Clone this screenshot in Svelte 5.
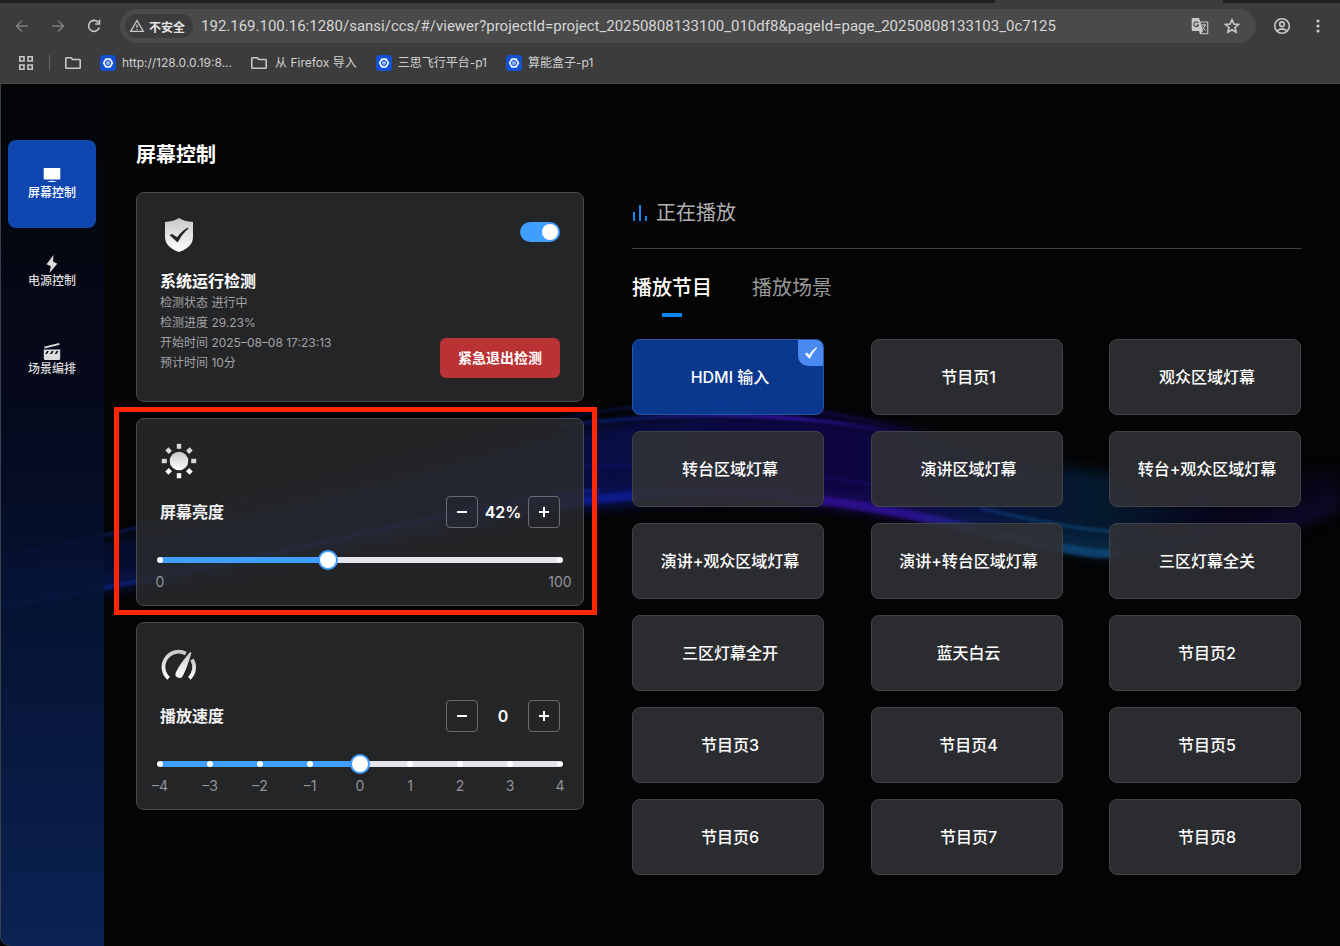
<script lang="ts">
  const navItems = [
    { id: "screen", label: "屏幕控制" },
    { id: "power", label: "电源控制" },
    { id: "scene", label: "场景编排" },
  ];

  const bookmarks = [
    { kind: "folder", label: "" },
    { kind: "site", label: "http://128.0.0.19:8..." },
    { kind: "folder", label: "从 Firefox 导入" },
    { kind: "site", label: "三思飞行平台-p1" },
    { kind: "site", label: "算能盒子-p1" },
  ];

  const status = [
    ["检测状态", "进行中"],
    ["检测进度", "29.23%"],
    ["开始时间", "2025–08–08 17:23:13"],
    ["预计时间", "10分"],
  ];

  const programs = [
    "HDMI 输入",
    "节目页1",
    "观众区域灯幕",
    "转台区域灯幕",
    "演讲区域灯幕",
    "转台+观众区域灯幕",
    "演讲+观众区域灯幕",
    "演讲+转台区域灯幕",
    "三区灯幕全关",
    "三区灯幕全开",
    "蓝天白云",
    "节目页2",
    "节目页3",
    "节目页4",
    "节目页5",
    "节目页6",
    "节目页7",
    "节目页8",
  ];

  const tabs = ["播放节目", "播放场景"];
  const speedMarks = [-4, -3, -2, -1, 0, 1, 2, 3, 4];

  let url = $state(
    "192.169.100.16:1280/sansi/ccs/#/viewer?projectId=project_20250808133100_010df8&pageId=page_20250808133103_0c7125",
  );
  let activeNav = $state("screen");
  let activeTab = $state(tabs[0]);
  let playing = $state(programs[0]);
  let checking = $state(true);
  let brightness = $state(42);
  let speed = $state(0);

  const clamp = (n: number, lo: number, hi: number) => Math.min(hi, Math.max(lo, n));
  const signed = (n: number) => (n < 0 ? `–${-n}` : `${n}`);
</script>

{#snippet slider(id: string, value: number, min: number, max: number, marks: number[], set: (n: number) => void)}
  <div class="slider">
    <div class="track">
      <div class="fill" style:width="{((value - min) / (max - min)) * 100}%"></div>
    </div>
    <div class="stops">
      {#each marks as m (m)}<i></i>{/each}
    </div>
    <input {id} type="range" {min} {max} {value} oninput={(e) => set(+e.currentTarget.value)} />
  </div>
  <div class="marks">
    {#each marks as m (m)}<span>{signed(m)}</span>{/each}
  </div>
{/snippet}

{#snippet stepper(text: string, name: string, step: (d: number) => void)}
  <div class="stepper">
    <button type="button" aria-label="{name} 减" onclick={() => step(-1)}>
      <svg width="12" height="12" viewBox="0 0 12 12"><path d="M1 6h10" /></svg>
    </button>
    <output>{text}</output>
    <button type="button" aria-label="{name} 加" onclick={() => step(1)}>
      <svg width="12" height="12" viewBox="0 0 12 12"><path d="M1 6h10M6 1v10" /></svg>
    </button>
  </div>
{/snippet}

<div class="window">
  <header class="chrome">
    <div class="strip"><div class="strip-tab"></div></div>
    <div class="toolbar">
      <button type="button" class="tool dim" aria-label="后退">
        <svg width="16" height="16" viewBox="0 0 16 16"><path d="M14 8H3M8 2.500L2.500 8L8 13.500" /></svg>
      </button>
      <button type="button" class="tool dim" aria-label="前进">
        <svg width="16" height="16" viewBox="0 0 16 16"><path d="M2 8h11M8 2.500L13.500 8L8 13.500" /></svg>
      </button>
      <button type="button" class="tool" aria-label="刷新">
        <svg width="16" height="16" viewBox="0 0 16 16"><path d="M13.300 9.500A5.500 5.500 0 1 1 12.500 4.600M13.500 1.800V6H9.200" /></svg>
      </button>
      <div class="omnibox">
        <button type="button" class="chip">
          <svg width="16" height="16" viewBox="0 0 16 16"><path d="M8 2.500L14.300 13.300H1.700ZM8 6.500v3.200M8 10.900v1.200" /></svg>
          不安全
        </button>
        <input type="text" aria-label="地址" bind:value={url} />
        <button type="button" class="tool" aria-label="翻译">
          <svg width="18" height="18" viewBox="0 0 18 18">
            <path d="M2 1h6l1.300 3.500H16a1.300 1.300 0 0 1 1.300 1.300V16a1.300 1.300 0 0 1-1.300 1.300H9L8 14H2a1.300 1.300 0 0 1-1.300-1.300V2.300A1.300 1.300 0 0 1 2 1Z" fill="#c8c8c8" stroke="none" />
            <path d="M9.700 5.600H15.600a.6.6 0 0 1 .6.6V15.600a.6.6 0 0 1-.6.6H10.300L12 14Z" fill="#4a4a4a" stroke="none" />
            <path d="M7.200 6A2.400 2.400 0 1 0 7.500 8H5.300" stroke="#4a4a4a" stroke-width="1.200" />
            <path d="M10.300 8h5M12.800 6.800V8M14.300 8q-.8 3-3.300 4.800M11.200 9.500q1 2.200 3.600 4" stroke-width="1" />
          </svg>
        </button>
        <button type="button" class="tool" aria-label="收藏">
          <svg width="16" height="16" viewBox="0 0 16 16"><path d="M8 1.700L9.900 6L14.600 6.400L11 9.500L12.100 14.100L8 11.700L3.900 14.100L5 9.500L1.400 6.400L6.100 6Z" /></svg>
        </button>
      </div>
      <button type="button" class="tool" aria-label="个人资料">
        <svg width="18" height="18" viewBox="0 0 18 18"><circle cx="9" cy="9" r="7.300" /><circle cx="9" cy="7.200" r="2.300" /><path d="M4 14q5-4.200 10 0" /></svg>
      </button>
      <button type="button" class="tool" aria-label="菜单">
        <svg width="16" height="16" viewBox="0 0 16 16"><g fill="#c8c8c8" stroke="none"><circle cx="8" cy="3" r="1.600" /><circle cx="8" cy="8" r="1.600" /><circle cx="8" cy="13" r="1.600" /></g></svg>
      </button>
    </div>
    <nav class="bookmarks" aria-label="书签">
      <button type="button" class="apps" aria-label="应用">
        <svg width="16" height="16" viewBox="0 0 16 16"><path d="M1.800 1.800h4.200v4.200h-4.200ZM10 1.800h4.200v4.200H10ZM1.800 10h4.200v4.200h-4.200ZM10 10h4.200v4.200H10Z" /></svg>
      </button>
      <span class="divider"></span>
      {#each bookmarks as b, i (i)}
        <a href="#top" class={b.kind} aria-label={b.label || "文件夹"}>
          {#if b.kind === "folder"}
            <svg width="16" height="16" viewBox="0 0 16 16"><path d="M1.500 13.300Q.8 13.300 .8 12.500V3.500Q.8 2.700 1.500 2.700H6L7.700 4.500H14.500Q15.200 4.500 15.200 5.300V12.500Q15.200 13.300 14.500 13.300Z" /></svg>
          {:else}
            <svg width="16" height="16" viewBox="0 0 16 16">
              <rect width="16" height="16" rx="3.500" fill="#1450d2" stroke="none" />
              <path d="M5.400 3.300h5.200L13.300 8l-2.700 4.700H5.400L2.700 8Z" fill="#e9f2ff" stroke="none" />
              <circle cx="8" cy="8" r="2.600" fill="#8fb4f5" stroke="#1450d2" stroke-width="1" />
            </svg>
          {/if}
          {#if b.label}<span>{b.label}</span>{/if}
        </a>
      {/each}
    </nav>
  </header>

  <div class="app">
    <!-- light ribbons behind the panels -->
    <svg class="waves" viewBox="0 84 1340 862" preserveAspectRatio="none" aria-hidden="true">
      <defs>
        <linearGradient id="veil" gradientUnits="userSpaceOnUse" x1="0" x2="1340" y1="0" y2="0">
          <stop offset="0" stop-color="#061440" />
          <stop offset="0.3" stop-color="#060e3c" />
          <stop offset="0.46" stop-color="#0a1260" />
          <stop offset="0.63" stop-color="#12065a" />
          <stop offset="0.72" stop-color="#0a1858" />
          <stop offset="0.82" stop-color="#062440" />
          <stop offset="0.9" stop-color="#080828" />
          <stop offset="1" stop-color="#0c0622" />
        </linearGradient>
        <linearGradient id="ribbon" gradientUnits="userSpaceOnUse" x1="0" x2="1340" y1="0" y2="0">
          <stop offset="0" stop-color="#0d2a8c" />
          <stop offset="0.3" stop-color="#1222a0" />
          <stop offset="0.47" stop-color="#1020a8" />
          <stop offset="0.6" stop-color="#3a10a8" />
          <stop offset="0.68" stop-color="#3414b0" />
          <stop offset="0.76" stop-color="#10508c" />
          <stop offset="0.83" stop-color="#105890" />
          <stop offset="0.9" stop-color="#180f50" />
          <stop offset="1" stop-color="#1e1048" />
        </linearGradient>
        <linearGradient id="crest" gradientUnits="userSpaceOnUse" x1="0" x2="960" y1="0" y2="0">
          <stop offset="0" stop-color="#123a9c" />
          <stop offset="0.12" stop-color="#142a9c" />
          <stop offset="0.35" stop-color="#0c1444" />
          <stop offset="0.65" stop-color="#0c1c70" />
          <stop offset="0.82" stop-color="#3812b0" />
          <stop offset="1" stop-color="#200a70" stop-opacity="0" />
        </linearGradient>
        <filter id="soft" x="-10%" y="-50%" width="120%" height="200%" color-interpolation-filters="sRGB"><feGaussianBlur stdDeviation="7" /></filter>
        <filter id="fine" x="-10%" y="-50%" width="120%" height="200%" color-interpolation-filters="sRGB"><feGaussianBlur stdDeviation="1.400" /></filter>
      </defs>
      <path d="M0 562C240 515 420 470 600 425C720 405 850 408 960 446C1080 475 1200 490 1340 470V510C1270 546 1150 560 1062 544C950 524 880 498 745 494C520 494 300 560 0 602Z" fill="url(#veil)" opacity="0.700" filter="url(#soft)" />
      <g fill="none" stroke="url(#ribbon)">
        <path d="M0 602C300 555 470 510 640 497C800 488 880 506 960 524S1130 560 1210 542S1300 520 1340 500" stroke-width="14" opacity="0.400" filter="url(#soft)" />
        <path d="M560 504C680 486 770 492 860 506S1000 538 1062 548S1090 552 1120 553" stroke-width="9" opacity="0.650" filter="url(#fine)" />
        <path d="M0 607C300 555 430 510 600 490" stroke-width="3" opacity="0.800" filter="url(#fine)" />
        <path d="M980 508C1030 520 1080 530 1120 532" stroke-width="3" opacity="0.600" filter="url(#fine)" />
        <path d="M240 540C400 480 560 462 640 466C780 464 860 480 960 505" stroke-width="2" opacity="0.400" filter="url(#fine)" />
      </g>
      <g fill="none" stroke="url(#crest)" filter="url(#fine)">
        <path d="M0 558C240 510 420 448 600 411C720 394 830 405 940 440" stroke-width="2" opacity="0.700" />
        <path d="M560 426C680 410 800 412 900 434" stroke-width="3" />
      </g>
    </svg>

    <nav class="sidebar" aria-label="主导航">
      {#each navItems as item (item.id)}
        <button type="button" class:active={activeNav === item.id} onclick={() => (activeNav = item.id)}>
          <svg width="18" height="18" viewBox="0 0 18 18" fill="currentColor">
            {#if item.id === "screen"}
              <path d="M1.500 1H16.500Q17.300 1 17.300 1.800V11.700Q17.300 12.500 16.500 12.500H1.500Q.7 12.500 .7 11.700V1.800Q.7 1 1.500 1ZM4.300 15q4.700-2.300 9.400 0Z" />
            {:else if item.id === "power"}
              <path d="M10.500 0L3.500 9.300L7.800 11.200L6.500 18L14.300 8.700L10 6.500Z" />
            {:else}
              <path d="M1 3.800L16 0L16.700 1.800L1.800 5.500Z" />
              <path fill-rule="evenodd" d="M.8 6.500H17.200V15.500Q17.200 17 15.700 17H2.300Q.8 17 .8 15.500ZM4 8L2.200 11H4L5.800 8ZM8.800 8L7 11H8.800L10.600 8ZM13.600 8L11.800 11H13.600L15.400 8Z" />
            {/if}
          </svg>
          <span>{item.label}</span>
        </button>
      {/each}
    </nav>

    <main>
      <h1>屏幕控制</h1>
      <div class="columns">
        <div class="cards">
          <section class="card">
            <div class="card-head">
              <svg class="icon" viewBox="0 0 38 38">
                <defs>
                  <linearGradient id="metal" x1="0" x2="0" y1="0" y2="1">
                    <stop offset="0" stop-color="#c8c8c8" />
                    <stop offset="1" stop-color="#fff" />
                  </linearGradient>
                </defs>
                <path fill="url(#metal)" d="M19 2Q24 5.500 33 6V21Q33 31 19 36Q5 31 5 21V6Q14 5.500 19 2Z" />
                <path fill="#242527" d="M9.500 19L12.300 18L17 21.300Q22 14.500 28 11.500L28.500 12.500Q22 18 18 26H17Z" />
              </svg>
              <label class="switch">
                <input type="checkbox" aria-label="系统运行检测" bind:checked={checking} />
              </label>
            </div>
            <div class="check">
              <div>
                <h2>系统运行检测</h2>
                {#each status as [name, value] (name)}
                  <p>{name} {value}</p>
                {/each}
              </div>
              <button type="button" class="danger" onclick={() => (checking = false)}>紧急退出检测</button>
            </div>
          </section>

          <section class="card marked">
            <svg class="icon" viewBox="0 0 38 38" fill="url(#metal)">
              <circle cx="19" cy="19" r="9.300" />
              {#each [0, 45, 90, 135, 180, 225, 270, 315] as a (a)}
                <rect x="16.800" y="1.800" width="4.400" height="5" fill={a > 90 && a < 270 ? "#fff" : "#d8d8d8"} transform="rotate({a} 19 19)" />
              {/each}
            </svg>
            <div class="row">
              <label for="brightness">屏幕亮度</label>
              {@render stepper(`${brightness}%`, "屏幕亮度", (d) => (brightness = clamp(brightness + d, 0, 100)))}
            </div>
            {@render slider("brightness", brightness, 0, 100, [0, 100], (n) => (brightness = n))}
          </section>

          <section class="card">
            <svg class="icon" viewBox="0 0 38 38">
              <g fill="none" stroke="url(#metal)" stroke-width="3.800">
                <path d="M8.600 32.300A15.200 15.200 0 0 1 25.800 7.500" />
                <path d="M32 13.500A15.200 15.200 0 0 1 29.400 32.300" />
              </g>
              <path fill="url(#metal)" d="M30 6L31.500 6.800Q27 22 23 29.500A3.900 3.900 0 0 1 15.800 26.500Q19 19 30 6Z" />
            </svg>
            <div class="row">
              <label for="speed">播放速度</label>
              {@render stepper(signed(speed), "播放速度", (d) => (speed = clamp(speed + d, -4, 4)))}
            </div>
            {@render slider("speed", speed, -4, 4, speedMarks, (n) => (speed = n))}
          </section>
        </div>

        <section class="player">
          <div class="now">
            <svg width="16" height="18" viewBox="0 0 16 18"><path d="M2 8v9M8 1v16M14 12v5" stroke="#1487f0" stroke-width="2" /></svg>
            正在播放
          </div>
          <div class="tabs" role="tablist">
            {#each tabs as tab (tab)}
              <button type="button" role="tab" aria-selected={activeTab === tab} onclick={() => (activeTab = tab)}>{tab}</button>
            {/each}
          </div>
          <div class="grid">
            {#each programs as name (name)}
              <button type="button" class="tile" class:playing={playing === name} onclick={() => (playing = name)}>
                {name}
                {#if playing === name}
                  <span class="tick">
                    <svg width="14" height="14" viewBox="0 0 14 14"><path fill="#fff" d="M1 8L3 6.500L5.300 9Q8 4 12.500 1L13 2Q8.500 6.500 6 12.500H5Z" /></svg>
                  </span>
                {/if}
              </button>
            {/each}
          </div>
        </section>
      </div>
    </main>
  </div>
</div>

<style>
  :global(body) {
    margin: 0;
    background: #040404;
  }
  .window {
    display: flex;
    flex-direction: column;
    min-height: 100vh;
    font-family: Inter, "Noto Sans CJK SC", sans-serif;
    color: #fff;
  }
  .window * {
    box-sizing: border-box;
  }
  button,
  input {
    margin: 0;
    padding: 0;
    border: 0;
    background: none;
    color: inherit;
    font: inherit;
  }
  button {
    cursor: pointer;
  }
  svg {
    display: block;
    flex: none;
  }

  /* browser chrome */
  .chrome {
    background: #3c3c3c;
    border-bottom: 1px solid #4a4a4a;
  }
  .chrome svg {
    fill: none;
    stroke: #c8c8c8;
    stroke-width: 1.6;
  }
  .strip {
    display: flex;
    justify-content: flex-end;
    height: 3px;
    padding-right: 117px;
    background: #202020;
  }
  .strip-tab {
    width: 228px;
    background: #3c3c3c;
  }
  .toolbar {
    display: flex;
    align-items: center;
    gap: 16px;
    padding: 6px 12px 0;
  }
  .tool {
    display: flex;
    align-items: center;
    justify-content: center;
    width: 20px;
    height: 20px;
  }
  .tool.dim svg {
    stroke: #7c7c7c;
  }
  .omnibox {
    display: flex;
    flex: 1;
    align-items: center;
    gap: 12px;
    height: 34px;
    padding: 0 14px 0 5px;
    border-radius: 17px;
    background: #4a4a4a;
  }
  .omnibox input {
    flex: 1;
    min-width: 0;
    margin-left: -4px;
    outline: none;
    color: #d6d6d6;
    font-family: Roboto, "Noto Sans CJK SC", sans-serif;
    font-size: 15px;
    line-height: 20px;
  }
  .chip {
    display: flex;
    align-items: center;
    gap: 4px;
    height: 24px;
    padding: 0 8px 0 4px;
    border-radius: 12px;
    background: #3c3c3c;
    color: #e4e4e4;
    font-size: 12px;
    font-weight: 600;
    white-space: nowrap;
  }
  .chip svg {
    stroke-width: 1.3;
  }
  .bookmarks {
    display: flex;
    align-items: center;
    gap: 19px;
    height: 40px;
    padding-left: 18px;
    color: #d0d0d0;
    font-size: 12px;
    line-height: 16px;
    white-space: nowrap;
  }
  .bookmarks a {
    display: flex;
    align-items: center;
    gap: 6px;
    color: inherit;
    text-decoration: none;
  }
  .bookmarks .folder {
    gap: 8px;
  }
  .divider {
    width: 1px;
    height: 16px;
    margin: 0 -4px;
    background: #666;
  }

  /* application */
  .app {
    position: relative;
    display: flex;
    flex: 1;
    background: #040404;
  }
  .waves {
    position: absolute;
    inset: 0;
    width: 100%;
    height: 100%;
  }
  .sidebar {
    position: relative;
    display: flex;
    flex: none;
    flex-direction: column;
    width: 104px;
    padding: 56px 8px;
    border-bottom-left-radius: 10px;
    background: linear-gradient(rgba(8, 14, 40, 0.1) 0%, rgba(5, 10, 32, 0.8) 35%, rgba(7, 22, 60, 0.88) 65%, #0b2254 100%);
    box-shadow: inset 1px 0 #39404e;
  }
  .sidebar button {
    display: flex;
    flex-direction: column;
    align-items: center;
    justify-content: center;
    height: 88px;
    border-radius: 8px;
    color: #dcdcdc;
    font-size: 12px;
    font-weight: 500;
    line-height: 16px;
  }
  .sidebar .active {
    background: #0e47b0;
    color: #fff;
  }
  main {
    position: relative;
    flex: 1;
    min-width: 0;
    padding: 56px 39px 56px 32px;
  }
  h1 {
    margin: 0 0 22px;
    font-size: 20px;
    font-weight: 700;
    line-height: 30px;
  }
  .columns {
    display: flex;
    align-items: flex-start;
    gap: 48px;
  }
  .cards {
    display: grid;
    flex: none;
    gap: 16px;
    width: 448px;
  }
  .card {
    position: relative;
    padding: 23px 23px 15px;
    border: 1px solid #4c4d4f;
    border-radius: 8px;
    background: rgba(39, 40, 42, 0.92);
  }
  .card:first-child {
    padding-bottom: 23px;
  }
  .marked {
    background: rgba(42, 43, 45, 0.84);
  }
  .marked::after {
    position: absolute;
    inset: -12px -14px -10px -23px;
    border: 5px solid #ff2600;
    content: "";
    pointer-events: none;
  }
  .icon {
    width: 38px;
    height: 38px;
  }
  .card-head {
    display: flex;
    justify-content: space-between;
  }
  .switch {
    display: flex;
    align-items: center;
    height: 32px;
  }
  .switch input {
    width: 40px;
    height: 20px;
    padding: 2px;
    border-radius: 10px;
    background: #4c4d4f;
    appearance: none;
    cursor: pointer;
  }
  .switch input::before {
    display: block;
    width: 16px;
    height: 16px;
    border-radius: 50%;
    background: #fff;
    content: "";
  }
  .switch input:checked {
    padding-left: 22px;
    background: #409eff;
  }
  .check {
    display: flex;
    justify-content: space-between;
    min-height: 108px;
    margin-top: 16px;
  }
  h2 {
    margin: 0 0 1px;
    font-size: 16px;
    font-weight: 600;
    line-height: 22px;
  }
  .check p {
    margin: 0;
    color: #a2a3a5;
    font-size: 12px;
    line-height: 20px;
  }
  .danger {
    align-self: flex-end;
    width: 120px;
    height: 40px;
    padding-bottom: 2px;
    border-radius: 6px;
    background: #ba3234;
    font-size: 14px;
    font-weight: 600;
  }
  .row {
    display: flex;
    align-items: center;
    justify-content: space-between;
    margin-top: 16px;
    font-size: 16px;
    font-weight: 600;
  }
  .row label {
    padding-bottom: 2px;
    color: #f0f0f0;
  }
  .stepper {
    display: flex;
    align-items: center;
  }
  .stepper button {
    display: flex;
    align-items: center;
    justify-content: center;
    width: 32px;
    height: 32px;
    border: 1px solid #6b6c70;
    border-radius: 4px;
  }
  .stepper svg {
    stroke: #fff;
    stroke-width: 2;
  }
  .stepper output {
    width: 50px;
    text-align: center;
  }

  /* the track, the stops and the range input share one grid cell */
  .slider {
    display: grid;
    align-items: center;
    margin-top: 22px;
  }
  .slider > * {
    grid-area: 1 / 1;
  }
  .track {
    height: 6px;
    border-radius: 3px;
    background: #e4e4ec;
  }
  .fill {
    height: 6px;
    border-radius: 3px 0 0 3px;
    background: #409eff;
  }
  .stops,
  .marks {
    display: flex;
    justify-content: space-between;
  }
  .stops i {
    width: 6px;
    height: 6px;
    margin: 0 -3px;
    border-radius: 50%;
    background: #fff;
  }
  .slider input {
    z-index: 1;
    height: 20px;
    margin: 0 -10px;
    appearance: none;
    cursor: pointer;
  }
  .slider input::-webkit-slider-thumb {
    width: 20px;
    height: 20px;
    border: 2px solid #409eff;
    border-radius: 50%;
    background: #fff;
    appearance: none;
  }
  .marks {
    margin-top: 4px;
    color: #909399;
    font-size: 14px;
    line-height: 16px;
    white-space: nowrap;
  }
  .marks span {
    display: flex;
    justify-content: center;
    width: 0;
  }

  .player {
    flex: 1;
    min-width: 0;
  }
  .now {
    display: flex;
    align-items: center;
    gap: 8px;
    padding: 6px 0 20px;
    border-bottom: 1px solid #404040;
    color: #b0b0b0;
    font-size: 20px;
    line-height: 30px;
  }
  .tabs {
    display: flex;
    gap: 40px;
    margin: 24px 0 22px;
  }
  .tabs button {
    color: #999;
    font-size: 20px;
    line-height: 30px;
  }
  .tabs button::after {
    display: block;
    width: 20px;
    height: 4px;
    margin: 10px auto 0;
    content: "";
  }
  .tabs button[aria-selected="true"] {
    color: #fff;
    font-weight: 500;
  }
  .tabs button[aria-selected="true"]::after {
    background: #0a84ee;
  }
  .grid {
    display: grid;
    grid-template-columns: repeat(3, 192px);
    grid-auto-rows: 76px;
    justify-content: space-between;
    row-gap: 16px;
  }
  .tile {
    position: relative;
    padding: 0 0 2px 4px;
    overflow: hidden;
    border: 1px solid #414246;
    border-radius: 8px;
    background: rgba(48, 49, 53, 0.9);
    font-size: 16px;
    font-weight: 500;
  }
  .tile.playing {
    border-color: #2a56a8;
    background: rgba(11, 60, 150, 0.94);
  }
  .tick {
    position: absolute;
    top: 0;
    right: 0;
    display: flex;
    align-items: center;
    justify-content: center;
    width: 25px;
    height: 26px;
    border-bottom-left-radius: 10px;
    background: #4a89f0;
  }
</style>
